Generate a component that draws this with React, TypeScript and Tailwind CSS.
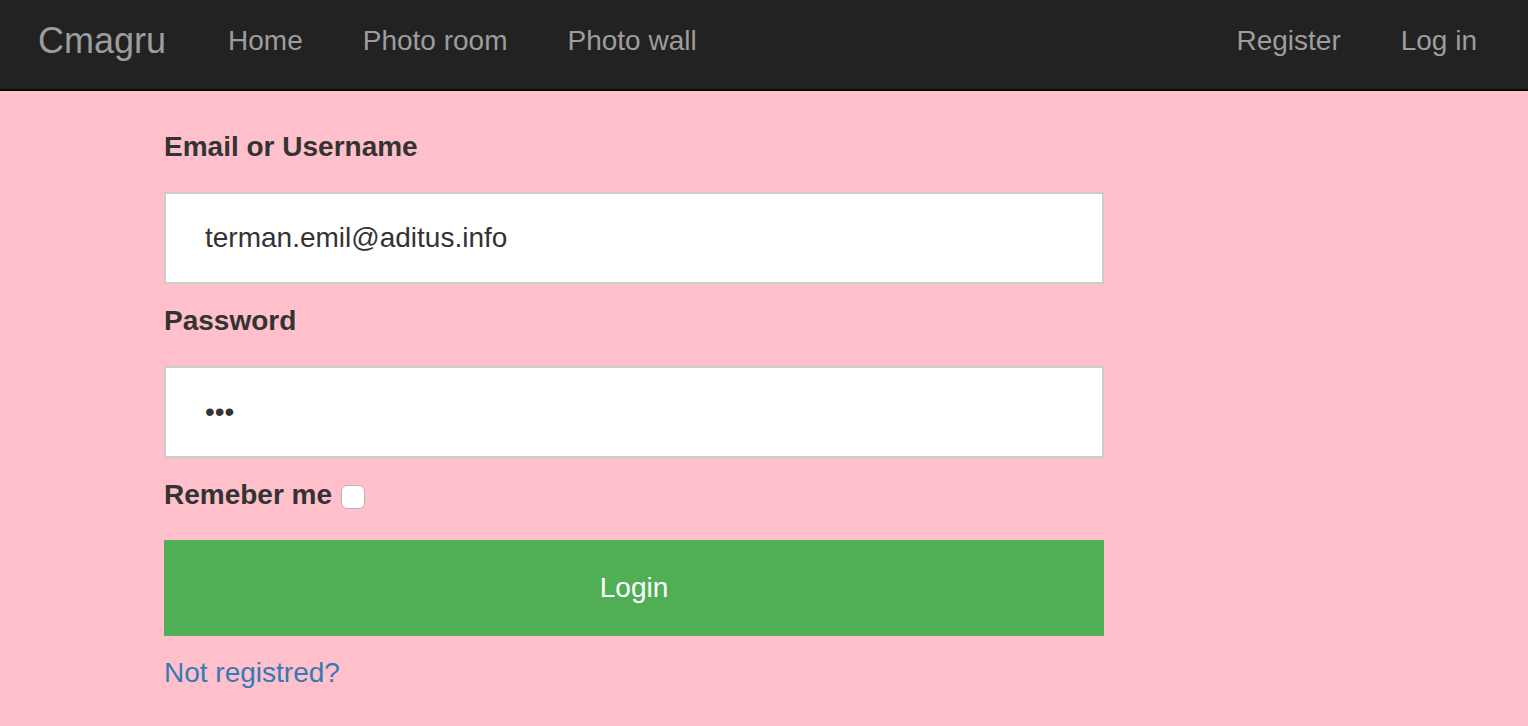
import { useState } from 'react'

const navLinks = ['Home', 'Photo room', 'Photo wall']

export default function App() {
  const [login, setLogin] = useState('terman.emil@aditus.info')
  const [password, setPassword] = useState('abc')
  const [remember, setRemember] = useState(false)

  return (
    <div className="min-h-[726px] bg-[#ffc0cb] font-['Liberation_Sans',Arial,sans-serif]">
      {/* Navbar */}
      <nav className="flex h-[91px] items-center border-b-2 border-[#080808] bg-[#222222] pb-[8px] pl-[38px] pr-[21px]">
        <a href="#" className="mr-[32px] text-[36px] leading-[40px] text-[#9d9d9d]">
          Cmagru
        </a>
        {navLinks.map((link) => (
          <a key={link} href="#" className="px-[30px] text-[28px] leading-[40px] text-[#9d9d9d]">
            {link}
          </a>
        ))}
        <div className="ml-auto flex">
          <a href="#" className="px-[30px] text-[28px] leading-[40px] text-[#9d9d9d]">
            Register
          </a>
          <a href="#" className="pl-[30px] pr-[30px] text-[28px] leading-[40px] text-[#9d9d9d]">
            Log in
          </a>
        </div>
      </nav>

      {/* Login form */}
      <form className="ml-[164px] w-[940px] pt-[36px]" onSubmit={(e) => e.preventDefault()}>
        <label className="mb-[25px] block text-[28px] font-bold leading-[40px] text-[#333333]">
          Email or Username
        </label>
        <input
          type="text"
          value={login}
          onChange={(e) => setLogin(e.target.value)}
          className="mb-[17px] block h-[92px] w-full border-2 border-[#cccccc] bg-white px-[39px] text-[28px] text-[#333333] outline-none"
        />
        <label className="mb-[25px] block text-[28px] font-bold leading-[40px] text-[#333333]">
          Password
        </label>
        <input
          type="password"
          value={password}
          onChange={(e) => setPassword(e.target.value)}
          className="mb-[17px] block h-[92px] w-full border-2 border-[#cccccc] bg-white px-[39px] text-[28px] text-[#333333] outline-none"
        />
        <div className="mb-[25px] flex h-[40px] items-center">
          <label className="text-[28px] font-bold leading-[40px] text-[#333333]">Remeber me</label>
          <input
            type="checkbox"
            checked={remember}
            onChange={(e) => setRemember(e.target.checked)}
            className="ml-[9px] mt-[3px] h-[24px] w-[24px] appearance-none rounded-[6px] border border-[#b5b5b5] bg-white"
          />
        </div>
        <button
          type="submit"
          className="block h-[96px] w-full bg-[#50ae55] text-[28px] text-white"
        >
          Login
        </button>
        <a href="#" className="mt-[17px] block text-[28px] leading-[40px] text-[#337ab7]">
          Not registred?
        </a>
      </form>
    </div>
  )
}
